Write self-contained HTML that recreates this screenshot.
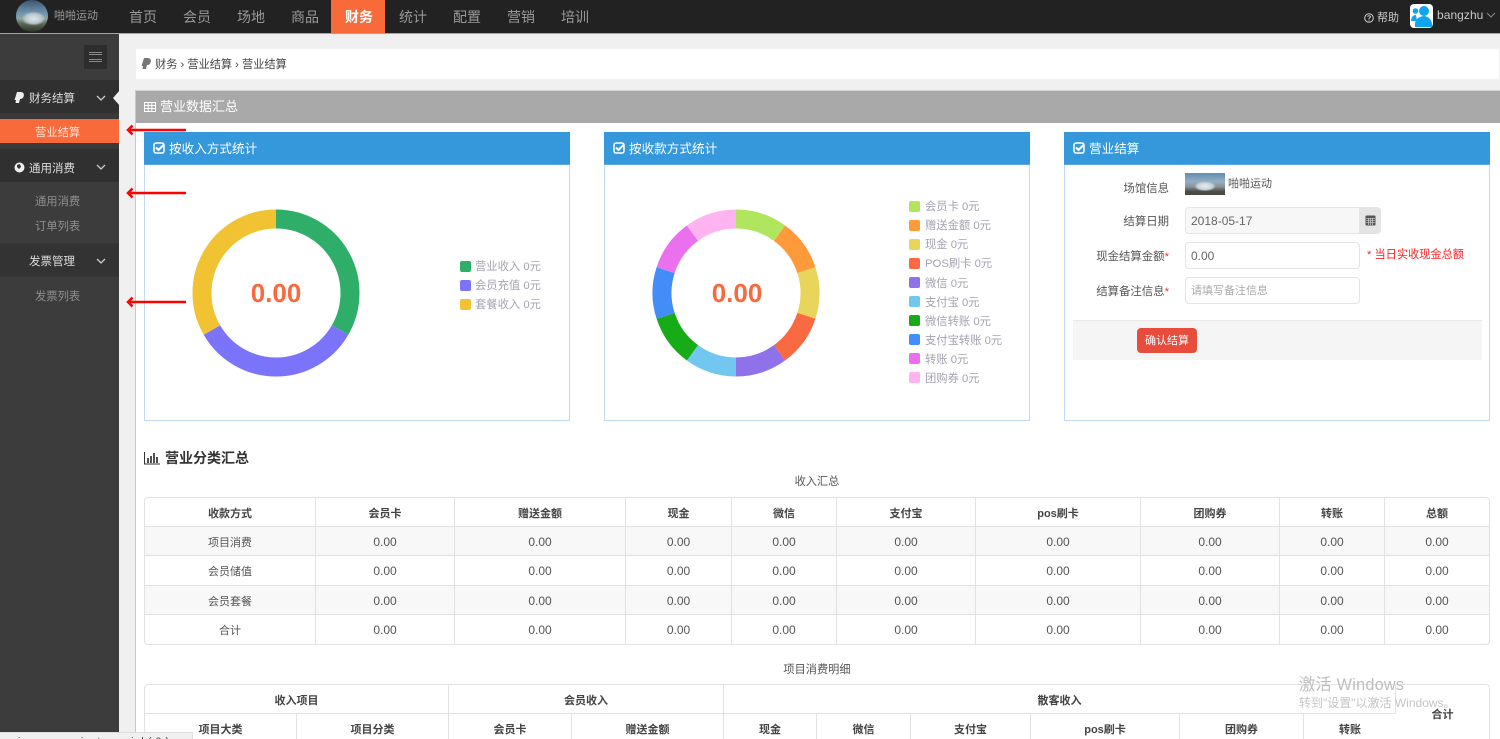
<!DOCTYPE html>
<html lang="zh"><head><meta charset="utf-8"><title>营业结算</title>
<style>
*{box-sizing:border-box}
html,body{margin:0;padding:0;width:1500px;height:739px;overflow:hidden;background:#f0f0f0}
#w{position:relative;width:1500px;height:739px;overflow:hidden;background:#f0f0f0;font-family:"Liberation Sans","Noto Sans CJK SC",sans-serif;font-size:12px;color:#555}
.a{position:absolute;white-space:nowrap;line-height:16px}
.nav{position:absolute;top:8px;font-size:14px;line-height:18px;color:#999}
.sb{position:absolute;left:0;width:119px;background:#303030}
.sub{position:absolute;left:35px;color:#8f8f8f;line-height:16px;font-size:11.3px}
.side{color:#ddd;left:29px;position:absolute;line-height:16px;font-size:11.5px}
.card{position:absolute;top:132px;width:426px;height:289px;border:1px solid #c0d9f4;background:#fff}
.card .h{position:absolute;left:-1px;top:-1px;width:426px;height:33px;background:#3498db;color:#fff;font-size:12.6px;line-height:35px;padding-left:25px;border-bottom:1px solid #5ba8e2}
.ic{position:absolute;left:9px;top:10px}
.lg{position:absolute;width:11px;height:11px;border-radius:2px}
.lt{position:absolute;color:#a3a3b2;line-height:16px;white-space:nowrap;font-size:11.3px;margin-top:1px}
.lab{position:absolute;width:105px;text-align:right;left:1064px;line-height:16px;color:#555;font-size:11.4px;margin-top:1px}
.lab i{color:#e33;font-style:normal}
.inp{position:absolute;left:1185px;width:175px;height:27px;border:1px solid #e4e4e4;border-radius:4px;background:#fff;padding-left:5px;line-height:27px;font-size:11px}
.num{font-size:12px;color:#666}
table{position:absolute;border-collapse:separate;border-spacing:0;table-layout:fixed;border:1px solid #e2e2e2;border-radius:4px;background:#fff;font-size:12px;color:#555}
td,th{border-right:1px solid #e2e2e2;border-bottom:1px solid #e2e2e2;text-align:center;padding:2px 0 0;height:29.2px;font-weight:normal}
th{font-weight:bold;color:#444;font-size:11px}
td:first-child{font-size:11px}
td:last-child,th:last-child{border-right:0}
tr:last-child td{border-bottom:0}
tr.g td{background:#f8f8f8}
.arr{position:absolute;left:125px;z-index:5}
</style></head><body><div id="w">

<div style="position:absolute;left:0;top:0;width:1500px;height:34px;background:#222;border-bottom:1px solid #a5a5a5"></div>
<div style="position:absolute;left:16px;top:0;width:32px;height:32px;border-radius:50%;background:radial-gradient(ellipse 12px 7px at 55% 58%,#dfe6ea 0,#b9c4cc 70%,transparent 100%),linear-gradient(#3b5572 0,#6f93ad 40%,#8ea5a8 58%,#56654c 76%,#2d2f2c 100%)"></div>
<div class="a" style="left:54px;top:8px;color:#999;font-size:11px">啪啪运动</div>
<div class="nav" style="left:129px">首页</div>
<div class="nav" style="left:183px">会员</div>
<div class="nav" style="left:237px">场地</div>
<div class="nav" style="left:291px">商品</div>
<div style="position:absolute;left:331px;top:0;width:54px;height:33px;background:#f96a3b"></div>
<div class="nav" style="left:345px;color:#fff;font-weight:bold">财务</div>
<div class="nav" style="left:399px">统计</div>
<div class="nav" style="left:453px">配置</div>
<div class="nav" style="left:507px">营销</div>
<div class="nav" style="left:561px">培训</div>
<svg style="position:absolute;left:1364px;top:13px" width="10" height="10" viewBox="0 0 10 10"><circle cx="5" cy="5" r="4.300" fill="none" stroke="#ccc"/><path d="M3.500 3.500Q5 2 6.500 3.500Q6.500 4.500 5 5.500V6.500M5 7.500V8.200" stroke="#ccc" fill="none"/></svg>
<div class="a" style="left:1377px;top:10px;color:#ccc;font-size:11px">帮助</div>
<div style="position:absolute;left:1410px;top:4px;width:23px;height:24px;background:#fff;border-radius:4px;overflow:hidden"><svg width="23" height="24" viewBox="0 0 23 24"><circle cx="5.500" cy="7" r="2.800" fill="#0ea5ee"/><circle cx="14" cy="7" r="5" fill="#0ea5ee"/><path d="M1 17Q1.500 11 6 11L7 17ZM5 23Q4 13 14 12Q22 13 22.500 23Z" fill="#0ea5ee"/></svg></div>
<div class="a" style="left:1437px;top:7px;color:#c8c8c8;font-size:12px;letter-spacing:.05px">bangzhu</div>
<svg style="position:absolute;left:1486px;top:12px" width="10" height="6"><path d="M1 1L5 5L9 1" stroke="#888" fill="none"/></svg>

<div style="position:absolute;left:0;top:34px;width:119px;height:698px;background:#3c3c3c"></div>
<div style="position:absolute;left:84px;top:45px;width:23px;height:24px;background:#2d2d2d"></div>
<div style="position:absolute;left:89px;top:52px;width:13px;height:10px;border-top:1px solid #888;border-bottom:1px solid #888"></div>
<div style="position:absolute;left:89px;top:54px;width:13px;height:6px;border-top:1px solid #888;border-bottom:1px solid #888"></div>
<div class="sb" style="top:80px;height:33px"></div>
<div class="sb" style="top:113px;height:6px;background:#393939"></div>
<div style="position:absolute;left:0;top:119px;width:119px;height:24px;background:#f96a3b"></div>
<div class="sb" style="top:143px;height:6px;background:#393939"></div>
<div class="sb" style="top:149px;height:33px"></div>
<div class="sb" style="top:243px;height:34px;background:#333"></div>
<svg style="position:absolute;left:14px;top:92px" width="11" height="12"><path d="M3 0H7.500Q10.500 1 9.800 4Q9 7 6 7L5 11H1.500L2 8H.5Z" fill="#eee"/></svg>
<div class="side" style="top:91px">财务结算</div>
<svg style="position:absolute;left:96px;top:95px" width="10" height="7"><path d="M1 1L5 5L9 1" stroke="#ccc" stroke-width="1.300" fill="none"/></svg>
<svg style="position:absolute;left:113px;top:88px" width="7" height="20"><path d="M7 2L0 10L7 18Z" fill="#f0f0f0"/></svg>
<div class="a" style="left:35px;top:125px;color:#ffe3d8;font-size:11.3px">营业结算</div>
<svg style="position:absolute;left:14px;top:162px" width="11" height="11"><circle cx="5.500" cy="5.500" r="5" fill="#eee"/><path d="M3 3L6 2L7 5L5 7L3 5Z" fill="#333"/></svg>
<div class="side" style="top:161px">通用消费</div>
<svg style="position:absolute;left:96px;top:164px" width="10" height="7"><path d="M1 1L5 5L9 1" stroke="#ccc" stroke-width="1.300" fill="none"/></svg>
<div class="sub" style="top:194px">通用消费</div>
<div class="sub" style="top:219px">订单列表</div>
<div class="side" style="top:254px">发票管理</div>
<svg style="position:absolute;left:96px;top:258px" width="10" height="7"><path d="M1 1L5 5L9 1" stroke="#ccc" stroke-width="1.300" fill="none"/></svg>
<div class="sub" style="top:289px">发票列表</div>

<div style="position:absolute;left:135px;top:90px;width:1365px;height:649px;background:#fff;border-left:1px solid #c9c9c9;border-top:1px solid #d5d5d5"></div>
<div style="position:absolute;left:136px;top:49px;width:1363px;height:30px;background:#fff"></div>
<svg style="position:absolute;left:141px;top:58px" width="11" height="12"><path d="M3 0H7.500Q10.500 1 9.800 4Q9 7 6 7L5 11H1.500L2 8H.5Z" fill="#777"/></svg>
<div class="a" style="left:155px;top:57px;font-size:11.2px;color:#444">财务 › 营业结算 › 营业结算</div>
<div style="position:absolute;left:136px;top:91px;width:1364px;height:32px;background:#a9a9a9"></div>
<svg style="position:absolute;left:144px;top:102px" width="12" height="10"><path d="M.5 .5H11.500V9.500H.5ZM.5 3.500H11.500M.5 6.500H11.500M4.200 .5V9.500M7.800 .5V9.500" stroke="#fff" fill="none"/></svg>
<div class="a" style="left:160px;top:99px;color:#fff;font-size:13px">营业数据汇总</div>

<div class="card" style="left:144px"><div class="h"><svg class="ic" width="12" height="12"><rect x="1" y="1" width="10" height="10" rx="2" fill="none" stroke="#fff" stroke-width="1.500"/><path d="M3 5.500L5.500 8L11 2.500" stroke="#fff" stroke-width="2" fill="none"/></svg>按收入方式统计</div></div>
<div class="card" style="left:604px"><div class="h"><svg class="ic" width="12" height="12"><rect x="1" y="1" width="10" height="10" rx="2" fill="none" stroke="#fff" stroke-width="1.500"/><path d="M3 5.500L5.500 8L11 2.500" stroke="#fff" stroke-width="2" fill="none"/></svg>按收款方式统计</div></div>
<div class="card" style="left:1064px"><div class="h"><svg class="ic" width="12" height="12"><rect x="1" y="1" width="10" height="10" rx="2" fill="none" stroke="#fff" stroke-width="1.500"/><path d="M3 5.500L5.500 8L11 2.500" stroke="#fff" stroke-width="2" fill="none"/></svg>营业结算</div></div>

<svg class="arr" style="top:124px" width="64" height="12"><path d="M61 6H5" stroke="#f00" stroke-width="2.500"/><path d="M7.500 1.500L3 6L7.500 10.500" stroke="#f00" stroke-width="2.500" fill="none"/></svg>
<svg class="arr" style="top:187px" width="64" height="12"><path d="M61 6H5" stroke="#f00" stroke-width="2.500"/><path d="M7.500 1.500L3 6L7.500 10.500" stroke="#f00" stroke-width="2.500" fill="none"/></svg>
<svg class="arr" style="top:296px" width="64" height="12"><path d="M61 6H5" stroke="#f00" stroke-width="2.500"/><path d="M7.500 1.500L3 6L7.500 10.500" stroke="#f00" stroke-width="2.500" fill="none"/></svg>

<svg style="position:absolute;left:185.500px;top:203px" width="180" height="180" viewBox="-90 -90 180 180" fill="none" stroke-width="19">
<path d="M0 -74A74 74 0 0 1 64.090 37" stroke="#2fae69"/>
<path d="M64.090 37A74 74 0 0 1 -64.090 37" stroke="#7b74fb"/>
<path d="M-64.090 37A74 74 0 0 1 0 -74" stroke="#f1c232"/>
</svg>
<div class="a" style="left:225px;top:278px;width:102px;text-align:center;font-size:26px;line-height:30px;font-weight:bold;color:#f9683f">0.00</div>
<div class="lg" style="left:460px;top:261px;background:#2fae69"></div><div class="lt" style="left:475px;top:258px">营业收入 0元</div>
<div class="lg" style="left:460px;top:280px;background:#7b74fb"></div><div class="lt" style="left:475px;top:277px">会员充值 0元</div>
<div class="lg" style="left:460px;top:299px;background:#f1c232"></div><div class="lt" style="left:475px;top:296px">套餐收入 0元</div>

<svg style="position:absolute;left:645.500px;top:203px" width="180" height="180" viewBox="-90 -90 180 180" fill="none" stroke-width="19">
<path d="M0 -74A74 74 0 0 1 43.500 -59.870" stroke="#b0e65e"/>
<path d="M43.500 -59.870A74 74 0 0 1 70.380 -22.870" stroke="#ff9a3b"/>
<path d="M70.380 -22.870A74 74 0 0 1 70.380 22.870" stroke="#e9d55b"/>
<path d="M70.380 22.870A74 74 0 0 1 43.500 59.870" stroke="#f96a43"/>
<path d="M43.500 59.870A74 74 0 0 1 0 74" stroke="#8f72ea"/>
<path d="M0 74A74 74 0 0 1 -43.500 59.870" stroke="#71c7f0"/>
<path d="M-43.500 59.870A74 74 0 0 1 -70.380 22.870" stroke="#17ab17"/>
<path d="M-70.380 22.870A74 74 0 0 1 -70.380 -22.870" stroke="#428df8"/>
<path d="M-70.380 -22.870A74 74 0 0 1 -43.500 -59.870" stroke="#ea70ee"/>
<path d="M-43.500 -59.870A74 74 0 0 1 0 -74" stroke="#ffb3f0"/>
</svg>
<div class="a" style="left:686px;top:278px;width:102px;text-align:center;font-size:26px;line-height:30px;font-weight:bold;color:#f9683f">0.00</div>
<div class="lg" style="left:909px;top:201px;background:#b0e65e"></div><div class="lt" style="left:925px;top:198px">会员卡 0元</div>
<div class="lg" style="left:909px;top:220px;background:#ff9a3b"></div><div class="lt" style="left:925px;top:217px">赠送金额 0元</div>
<div class="lg" style="left:909px;top:239px;background:#e9d55b"></div><div class="lt" style="left:925px;top:236px">现金 0元</div>
<div class="lg" style="left:909px;top:258px;background:#f96a43"></div><div class="lt" style="left:925px;top:255px">POS刷卡 0元</div>
<div class="lg" style="left:909px;top:277px;background:#8f72ea"></div><div class="lt" style="left:925px;top:275px">微信 0元</div>
<div class="lg" style="left:909px;top:296px;background:#71c7f0"></div><div class="lt" style="left:925px;top:294px">支付宝 0元</div>
<div class="lg" style="left:909px;top:315px;background:#17ab17"></div><div class="lt" style="left:925px;top:313px">微信转账 0元</div>
<div class="lg" style="left:909px;top:334px;background:#428df8"></div><div class="lt" style="left:925px;top:332px">支付宝转账 0元</div>
<div class="lg" style="left:909px;top:353px;background:#ea70ee"></div><div class="lt" style="left:925px;top:351px">转账 0元</div>
<div class="lg" style="left:909px;top:372px;background:#ffb3f0"></div><div class="lt" style="left:925px;top:370px">团购券 0元</div>

<div class="lab" style="top:180px">场馆信息</div>
<div style="position:absolute;left:1185px;top:173px;width:40px;height:22px;background:radial-gradient(ellipse 11px 5px at 50% 60%,#e8ecef 0,#c7d0d6 70%,transparent 100%),linear-gradient(#5f8fb5 0,#93aec2 40%,#8a9299 62%,#4a4a40 85%)"></div>
<div class="a" style="left:1228px;top:176px;font-size:11px">啪啪运动</div>
<div class="lab" style="top:213px">结算日期</div>
<div class="inp num" style="top:207px;background:#f7f7f7;border-radius:4px 0 0 4px">2018-05-17</div>
<div style="position:absolute;left:1359px;top:207px;width:22px;height:27px;background:#e4e4e4;border-radius:0 4px 4px 0"></div>
<svg style="position:absolute;left:1365px;top:214px" width="11" height="12"><rect x=".5" y="1.500" width="10" height="10" rx="1" fill="#555"/><path d="M1 4.500H10M1 6.500H10M1 8.500H10M3.500 4V11M5.500 4V11M7.500 4V11" stroke="#e4e4e4" stroke-width=".6"/></svg>
<div class="lab" style="top:248px">现金结算金额<i>*</i></div>
<div class="inp num" style="top:242px">0.00</div>
<div class="a" style="left:1367px;top:247px;color:#f22;font-size:11.2px">* 当日实收现金总额</div>
<div class="lab" style="top:283px">结算备注信息<i>*</i></div>
<div class="inp" style="top:277px;color:#aaa">请填写备注信息</div>
<div style="position:absolute;left:1073px;top:320px;width:409px;height:40px;background:#f5f5f5;border-top:1px solid #e8e8e8"></div>
<div style="position:absolute;left:1137px;top:328px;width:60px;height:25px;background:#e74c3c;border-radius:4px;color:#fff;text-align:center;line-height:27px;font-size:11px">确认结算</div>

<svg style="position:absolute;left:144px;top:451px" width="16" height="14"><path d="M.5 1V13H16" stroke="#333" fill="none"/><path d="M4 7V12M7 5V12M10 2V12M13 6V12" stroke="#333" stroke-width="1.700"/></svg>
<div class="a" style="left:165px;top:449px;font-size:14px;line-height:18px;font-weight:bold;color:#333">营业分类汇总</div>
<div class="a" style="left:144px;top:474px;width:1346px;text-align:center;font-size:11.2px">收入汇总</div>

<table style="left:144px;top:497px;width:1346px;height:147px">
<colgroup><col style="width:171px"><col style="width:139px"><col style="width:171px"><col style="width:106px"><col style="width:105px"><col style="width:139px"><col style="width:165px"><col style="width:139px"><col style="width:105px"><col></colgroup>
<tr><th>收款方式</th><th>会员卡</th><th>赠送金额</th><th>现金</th><th>微信</th><th>支付宝</th><th>pos刷卡</th><th>团购券</th><th>转账</th><th>总额</th></tr>
<tr class="g"><td>项目消费</td><td>0.00</td><td>0.00</td><td>0.00</td><td>0.00</td><td>0.00</td><td>0.00</td><td>0.00</td><td>0.00</td><td>0.00</td></tr>
<tr><td>会员储值</td><td>0.00</td><td>0.00</td><td>0.00</td><td>0.00</td><td>0.00</td><td>0.00</td><td>0.00</td><td>0.00</td><td>0.00</td></tr>
<tr class="g"><td>会员套餐</td><td>0.00</td><td>0.00</td><td>0.00</td><td>0.00</td><td>0.00</td><td>0.00</td><td>0.00</td><td>0.00</td><td>0.00</td></tr>
<tr><td>合计</td><td>0.00</td><td>0.00</td><td>0.00</td><td>0.00</td><td>0.00</td><td>0.00</td><td>0.00</td><td>0.00</td><td>0.00</td></tr>
</table>

<div class="a" style="left:144px;top:662px;width:1346px;text-align:center;font-size:11.2px">项目消费明细</div>
<table style="left:144px;top:684px;width:1346px">
<colgroup><col style="width:152px"><col style="width:152px"><col style="width:123px"><col style="width:152px"><col style="width:93px"><col style="width:94px"><col style="width:120px"><col style="width:149px"><col style="width:124px"><col style="width:92px"><col></colgroup>
<tr><th colspan="2">收入项目</th><th colspan="2">会员收入</th><th colspan="6">散客收入</th><th rowspan="2" style="border-bottom:0;padding-top:0">合计</th></tr>
<tr><th>项目大类</th><th>项目分类</th><th>会员卡</th><th>赠送金额</th><th>现金</th><th>微信</th><th>支付宝</th><th>pos刷卡</th><th>团购券</th><th>转账</th></tr>
</table>

<div class="a" style="left:1299px;top:675px;font-size:16.300px;line-height:20px;color:#bdbdbd;letter-spacing:.2px">激活 Windows</div>
<div class="a" style="left:1299px;top:695px;font-size:12px;color:#c4c4c4">转到"设置"以激活 Windows。</div>

<div style="position:absolute;left:0;top:732px;width:193px;height:7px;background:#f0f0f0;border-top:1px solid #ddd;border-right:1px solid #ddd;overflow:hidden"><div class="a" style="left:18px;top:1px;font-size:11px;color:#444;letter-spacing:4px">javascript:void(0);</div></div>
</div></body></html>
